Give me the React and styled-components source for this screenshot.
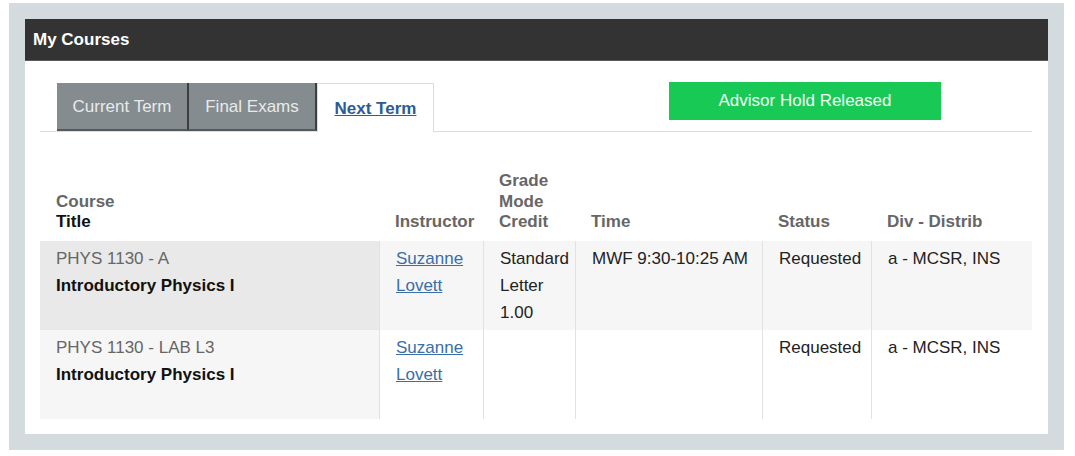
import React from 'react';
import styled, { createGlobalStyle } from 'styled-components';

const GlobalStyle = createGlobalStyle`
  html, body {
    margin: 0;
    padding: 0;
    background: #ffffff;
  }
  body {
    font-family: "Liberation Sans", Arial, sans-serif;
  }
`;

const Page = styled.div`
  padding: 3px 11px 6px 9px;
`;

const Frame = styled.div`
  background-color: #d3dbdf;
  padding: 16px;
  height: 447px;
  box-sizing: border-box;
`;

const Panel = styled.div`
  background-color: #ffffff;
  height: 100%;
  display: flex;
  flex-direction: column;
`;

const PanelHeader = styled.div`
  background-color: #333333;
  border-bottom: 1px solid #5a5a5a;
  color: #ffffff;
  font-weight: bold;
  font-size: 17px;
  display: flex;
  align-items: center;
  padding: 1px 0 0 8px;
  box-sizing: border-box;
  height: 42px;
`;

const Body = styled.div`
  padding: 21px 16px 0 15px;
`;

const TabBar = styled.div`
  display: flex;
  align-items: flex-start;
  border-bottom: 1px solid #dcdcdc;
  height: 50px;
  box-sizing: border-box;
  padding-left: 17px;
`;

const Tab = styled.div`
  height: 48px;
  box-sizing: border-box;
  display: flex;
  align-items: center;
  justify-content: center;
  font-size: 17px;
  margin-top: 1px;
  ${(p) =>
    p.$active
      ? `
    background: #ffffff;
    border: 1px solid #dcdcdc;
    border-bottom: none;
    height: 49px;
    color: #2b5c95;
    font-weight: bold;
    text-decoration: underline;
    width: 117px;
    padding-top: 2px;
  `
      : `
    background: #858c8f;
    color: #e8eaea;
    border-bottom: 2px solid #55595b;
    border-right: 2px solid #3a3f42;
    padding-top: 1px;
    width: ${p.$w}px;
  `}
`;

const HoldButton = styled.div`
  margin-left: auto;
  margin-right: 91px;
  width: 272px;
  height: 38px;
  background-color: #18c955;
  color: #f2fff5;
  font-size: 17px;
  display: flex;
  align-items: center;
  justify-content: center;
`;

const Table = styled.div`
  display: grid;
  grid-template-columns: 339px 104px 92px 187px 109px 161px;
  margin-top: 39px;
`;

const HeadCell = styled.div`
  align-self: end;
  font-size: 17px;
  font-weight: bold;
  line-height: 20.5px;
  color: #666666;
  padding: 0 0 8px 16px;
`;

const HeadDark = styled.div`
  color: #111111;
`;

const Cell = styled.div`
  height: 89px;
  box-sizing: border-box;
  padding: 4px 0 0 16px;
  font-size: 17px;
  line-height: 27px;
  color: #222222;
  white-space: nowrap;
  background-color: ${(p) => p.$bg};
  border-left: ${(p) => (p.$first ? 'none' : '1px solid #e2e2e2')};
`;

const Code = styled.div`
  color: #666666;
`;

const CourseTitle = styled.div`
  font-weight: bold;
  color: #111111;
`;

const Link = styled.a`
  display: block;
  color: #3a6ea8;
  text-decoration: underline;
  cursor: pointer;
`;

const rows = [
  {
    code: 'PHYS 1130 - A',
    title: 'Introductory Physics I',
    grade: ['Standard', 'Letter', '1.00'],
    time: 'MWF 9:30-10:25 AM',
    status: 'Requested',
    div: 'a - MCSR, INS',
    firstBg: '#e9e9e9',
    bg: '#f6f6f6',
  },
  {
    code: 'PHYS 1130 - LAB L3',
    title: 'Introductory Physics I',
    grade: [],
    time: '',
    status: 'Requested',
    div: 'a - MCSR, INS',
    firstBg: '#f6f6f6',
    bg: '#ffffff',
  },
];

const App = () => {
  return (
    <Page>
      <GlobalStyle />
      <Frame>
        <Panel>
          <PanelHeader>My Courses</PanelHeader>
          <Body>
            <TabBar>
              <Tab $w={132}>Current Term</Tab>
              <Tab $w={128}>Final Exams</Tab>
              <Tab $active>Next Term</Tab>
              <HoldButton>Advisor Hold Released</HoldButton>
            </TabBar>
            <Table>
              <HeadCell>
                Course
                <HeadDark>Title</HeadDark>
              </HeadCell>
              <HeadCell>Instructor</HeadCell>
              <HeadCell>
                Grade
                <br />
                Mode
                <br />
                Credit
              </HeadCell>
              <HeadCell>Time</HeadCell>
              <HeadCell>Status</HeadCell>
              <HeadCell>Div - Distrib</HeadCell>
              {rows.map((r) => (
                <React.Fragment key={r.code}>
                  <Cell $first $bg={r.firstBg}>
                    <Code>{r.code}</Code>
                    <CourseTitle>{r.title}</CourseTitle>
                  </Cell>
                  <Cell $bg={r.bg}>
                    <Link>Suzanne</Link>
                    <Link>Lovett</Link>
                  </Cell>
                  <Cell $bg={r.bg}>
                    {r.grade.map((g) => (
                      <div key={g}>{g}</div>
                    ))}
                  </Cell>
                  <Cell $bg={r.bg}>{r.time}</Cell>
                  <Cell $bg={r.bg}>{r.status}</Cell>
                  <Cell $bg={r.bg}>{r.div}</Cell>
                </React.Fragment>
              ))}
            </Table>
          </Body>
        </Panel>
      </Frame>
    </Page>
  );
};

export default App;
